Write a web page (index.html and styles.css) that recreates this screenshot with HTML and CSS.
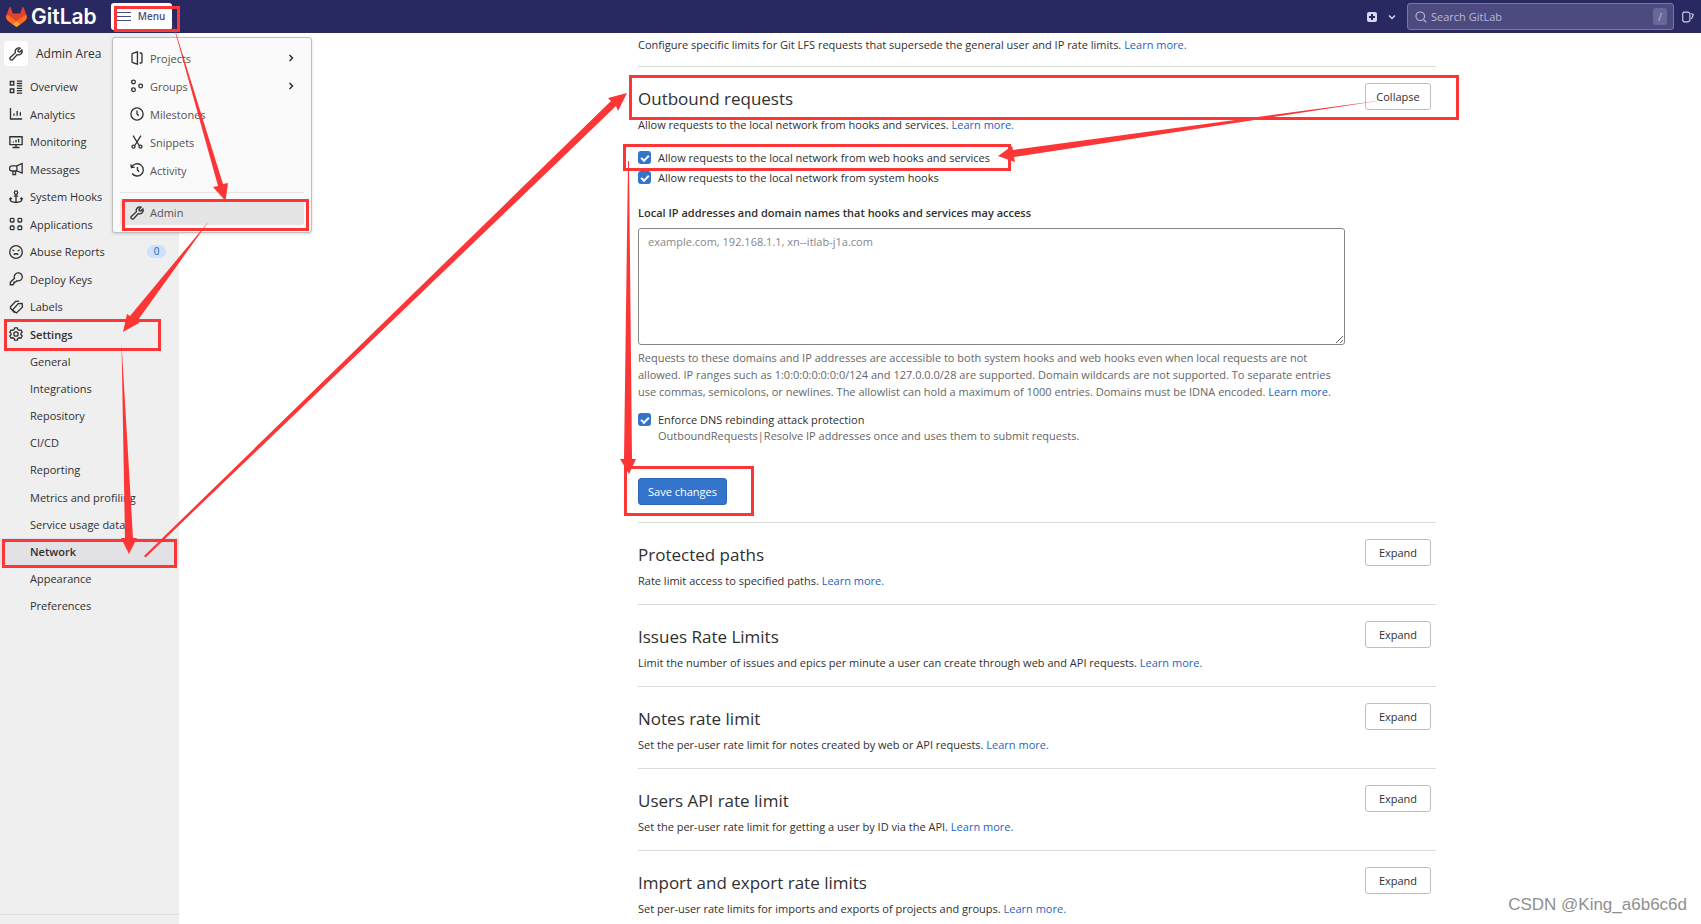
FILE: index.html
```html
<!DOCTYPE html>
<html lang="en">
<head>
<meta charset="utf-8">
<title>Network · Admin Area · GitLab</title>
<link rel="stylesheet" href="styles.css">
</head>
<body>
<svg class="sprite" aria-hidden="true">
  <symbol id="wrench" viewBox="0 0 16 16"><path d="M12.600 1.300a4 4 0 0 0-5.200 5.200L1.500 11.900a1.850 1.850 0 0 0 2.600 2.600L9.500 8.600a4 4 0 0 0 5.200-5.200L12.300 5.800 10.600 5.400 10.200 3.700z"/></symbol>
  <symbol id="overview" viewBox="0 0 16 16"><path d="M1.500 1.700h4v4h-4zM1.500 10.300h4v4h-4zM9 1.200h6M9 4h6M9 6.800h6M9 9.600h6M9 12.200h6M9 14.900h6"/></symbol>
  <symbol id="analytics" viewBox="0 0 16 16"><path d="M1.700 1v12.700H15M5.700 10V7.500M9.300 10V4.500M13 10V6"/></symbol>
  <symbol id="monitoring" viewBox="0 0 16 16"><path d="M1 2h14v9H1zM8 11v3M4 14.300h8M5 8.500V7.500M8 8.500v-3M11 8.500V4.500"/></symbol>
  <symbol id="messages" viewBox="0 0 16 16"><path d="M15 1.700v11L9 10.300H3.500A2.500 2.500 0 0 1 3.500 4.500H9zM9 4.500v5.800M4.500 10.500v4h3v-4"/></symbol>
  <symbol id="hook" viewBox="0 0 16 16"><path d="M8 5v9M5.500 7h5M1.500 9v2.500C2 14 6 14 8 14s6 0 6.500-2.500V9M.5 10.800l1.200-1.700 1.700 1.200M12.700 10.300l1.700-1.200 1.200 1.700"/><circle cx="8" cy="3" r="1.900"/></symbol>
  <symbol id="applications" viewBox="0 0 16 16"><rect x="1.500" y="1.500" width="4.200" height="4.200" rx="1"/><rect x="10.300" y="1.500" width="4.200" height="4.200" rx="1"/><rect x="1.500" y="10.300" width="4.200" height="4.200" rx="1"/><rect x="10.300" y="10.300" width="4.200" height="4.200" rx="1"/></symbol>
  <symbol id="abuse" viewBox="0 0 16 16"><circle cx="8" cy="8" r="7.200"/><path d="M5.500 11.300c1-1.700 4-1.700 5 0M4 5.500l2 1.300M12 5.500l-2 1.300"/></symbol>
  <symbol id="key" viewBox="0 0 16 16"><path d="M6.300 7.200a4.600 4.600 0 1 1 2.800 2.700L7.500 11.500H5.700v1.700L4.500 14.600H1.500v-2.800z"/><path d="M10.900 5h.2"/></symbol>
  <symbol id="labels" viewBox="0 0 16 16"><path d="M1 8.500 7.500 1.500 11.500 1.200M4 11.500 10.500 4.200l4.500-.2.300 4.300L8.500 14.800zM1 8.500 6.500 14.500M11.700 7.300h.5"/></symbol>
  <symbol id="gear" viewBox="0 0 16 16"><path d="M6.500 1h3l.6 2 1.500.8 2-.5 1.500 2.600L13.700 7.300v1.500l1.400 1.400-1.500 2.600-2-.5-1.500.8-.6 2h-3l-.6-2-1.500-.8-2 .5L.9 10.200l1.400-1.400V7.300L.9 5.900l1.500-2.600 2 .5L5.900 3z"/><circle cx="8" cy="8" r="2.500"/></symbol>
  <symbol id="project" viewBox="0 0 16 16"><path d="M3 2.700 8.500.9v14.200L3 13.300a1 1 0 0 1-.7-1V3.700A1 1 0 0 1 3 2.700zM11 2.300h1.700a1 1 0 0 1 1 1v9.400a1 1 0 0 1-1 1H11"/></symbol>
  <symbol id="groups" viewBox="0 0 16 16"><circle cx="4" cy="3.300" r="2.100"/><circle cx="4" cy="12.300" r="2.100"/><circle cx="12.200" cy="8" r="2.100"/></symbol>
  <symbol id="clock" viewBox="0 0 16 16"><circle cx="8" cy="8" r="7"/><path d="M8 4v4l2 2"/></symbol>
  <symbol id="snippets" viewBox="0 0 16 16"><path d="M3.500.800 10.500 12M12.500.800 5.500 12"/><circle cx="4" cy="13.300" r="1.700"/><circle cx="12" cy="13.300" r="1.700"/></symbol>
  <symbol id="history" viewBox="0 0 16 16"><path d="M2 4.500A7 7 0 1 1 2.500 12M1 1.500l.7 3.700 3.600-.5M8.500 4.500V8l2 2"/></symbol>
  <symbol id="right" viewBox="0 0 16 16"><path d="m6 4 4 4-4 4"/></symbol>
  <symbol id="down" viewBox="0 0 16 16"><path d="m4 6 4 4 4-4"/></symbol>
  <symbol id="search" viewBox="0 0 16 16"><circle cx="7" cy="7" r="5.700"/><path d="m11.500 11.500 3.500 3.500"/></symbol>
  <symbol id="issues" viewBox="0 0 16 16"><path d="M2.500 1.500H8l2.500 1.500v10L8 14.500H2.500L1 13V3zM12.500 3.500l2.500 1.200-2.300 6"/></symbol>
</svg>

<header class="topbar">
  <a class="brand" href="#" aria-label="GitLab">
    <svg class="brand-mark" viewBox="0 0 25 24" aria-hidden="true"><path fill="#e24329" d="m24.500 9.500-3.400-8.900a.9.900 0 0 0-1.700.1L17.100 7.700H7.900L5.600.7A.9.900 0 0 0 3.900.6L.5 9.500a6.300 6.300 0 0 0 2.100 7.300l9.900 7.200 9.900-7.200a6.300 6.300 0 0 0 2.100-7.300z"/><path fill="#fc6d26" d="M24.500 9.500a11.500 11.500 0 0 0-4.600 2.100l-7.400 5.600 4.700 3.600 5.200-4a6.300 6.300 0 0 0 2.100-7.300zM.5 9.500a11.500 11.500 0 0 1 4.600 2.100l7.400 5.600-4.700 3.600-5.200-4A6.300 6.300 0 0 1 .5 9.500z"/><path fill="#fca326" d="m7.800 20.800 4.700-3.600 4.700 3.600-4.700 3.200z"/></svg>
    <span>GitLab</span>
  </a>
  <button class="menu-button" type="button" aria-expanded="true"><i class="bars"></i>Menu</button>
  <div class="topbar-tools">
    <button class="new-button" type="button" aria-label="Create new"><span class="plus"></span><svg class="icon icon-small"><use href="#down"/></svg></button>
    <label class="search"><svg class="icon"><use href="#search"/></svg><input type="text" placeholder="Search GitLab" aria-label="Search GitLab"><kbd>/</kbd></label>
    <a class="issues-link" href="#" aria-label="Issues"><svg class="icon"><use href="#issues"/></svg></a>
  </div>
</header>

<div class="menu-panel">
  <a href="#"><svg class="icon"><use href="#project"/></svg>Projects<svg class="icon icon-small chevron"><use href="#right"/></svg></a>
  <a href="#"><svg class="icon"><use href="#groups"/></svg>Groups<svg class="icon icon-small chevron"><use href="#right"/></svg></a>
  <a href="#"><svg class="icon"><use href="#clock"/></svg>Milestones</a>
  <a href="#"><svg class="icon"><use href="#snippets"/></svg>Snippets</a>
  <a href="#"><svg class="icon"><use href="#history"/></svg>Activity</a>
  <hr>
  <a class="current" href="#"><svg class="icon"><use href="#wrench"/></svg>Admin</a>
</div>

<div class="page">
  <nav class="sidebar" aria-label="Admin navigation">
    <a class="context" href="#"><span class="context-icon"><svg class="icon"><use href="#wrench"/></svg></span>Admin Area</a>
    <ul class="nav-list">
      <li><a href="#"><svg class="icon"><use href="#overview"/></svg>Overview</a></li>
      <li><a href="#"><svg class="icon"><use href="#analytics"/></svg>Analytics</a></li>
      <li><a href="#"><svg class="icon"><use href="#monitoring"/></svg>Monitoring</a></li>
      <li><a href="#"><svg class="icon"><use href="#messages"/></svg>Messages</a></li>
      <li><a href="#"><svg class="icon"><use href="#hook"/></svg>System Hooks</a></li>
      <li><a href="#"><svg class="icon"><use href="#applications"/></svg>Applications</a></li>
      <li><a href="#"><svg class="icon"><use href="#abuse"/></svg>Abuse Reports<span class="count">0</span></a></li>
      <li><a href="#"><svg class="icon"><use href="#key"/></svg>Deploy Keys</a></li>
      <li><a href="#"><svg class="icon"><use href="#labels"/></svg>Labels</a></li>
      <li><a class="strong" href="#"><svg class="icon"><use href="#gear"/></svg>Settings</a></li>
    </ul>
    <ul class="nav-list nav-sub">
      <li><a href="#">General</a></li>
      <li><a href="#">Integrations</a></li>
      <li><a href="#">Repository</a></li>
      <li><a href="#">CI/CD</a></li>
      <li><a href="#">Reporting</a></li>
      <li><a href="#">Metrics and profiling</a></li>
      <li><a href="#">Service usage data</a></li>
      <li><a class="strong selected" href="#">Network</a></li>
      <li><a href="#">Appearance</a></li>
      <li><a href="#">Preferences</a></li>
    </ul>
    <div class="sidebar-foot"></div>
  </nav>

  <main class="main">
    <div class="settings">
      <p class="intro">Configure specific limits for Git LFS requests that supersede the general user and IP rate limits. <a href="#">Learn more.</a></p>

      <section class="section section-open">
        <div class="section-head">
          <div><h2>Outbound requests</h2><p>Allow requests to the local network from hooks and services. <a href="#">Learn more.</a></p></div>
          <button class="button" type="button">Collapse</button>
        </div>
        <form class="form">
          <label class="check"><input type="checkbox" checked><span>Allow requests to the local network from web hooks and services</span></label>
          <label class="check"><input type="checkbox" checked><span>Allow requests to the local network from system hooks</span></label>
          <label class="field-label" for="allowlist">Local IP addresses and domain names that hooks and services may access</label>
          <textarea id="allowlist" placeholder="example.com, 192.168.1.1, xn--itlab-j1a.com"></textarea>
          <p class="help">Requests to these domains and IP addresses are accessible to both system hooks and web hooks even when local requests are not allowed. IP ranges such as 1:0:0:0:0:0:0:0/124 and 127.0.0.0/28 are supported. Domain wildcards are not supported. To separate entries use commas, semicolons, or newlines. The allowlist can hold a maximum of 1000 entries. Domains must be IDNA encoded. <a href="#">Learn more.</a></p>
          <label class="check check-dns"><input type="checkbox" checked><span>Enforce DNS rebinding attack protection<small>OutboundRequests|Resolve IP addresses once and uses them to submit requests.</small></span></label>
          <button class="button button-primary" type="submit">Save changes</button>
        </form>
      </section>

      <section class="section"><div class="section-head"><div><h2>Protected paths</h2><p>Rate limit access to specified paths. <a href="#">Learn more.</a></p></div><button class="button" type="button">Expand</button></div></section>
      <section class="section"><div class="section-head"><div><h2>Issues Rate Limits</h2><p>Limit the number of issues and epics per minute a user can create through web and API requests. <a href="#">Learn more.</a></p></div><button class="button" type="button">Expand</button></div></section>
      <section class="section"><div class="section-head"><div><h2>Notes rate limit</h2><p>Set the per-user rate limit for notes created by web or API requests. <a href="#">Learn more.</a></p></div><button class="button" type="button">Expand</button></div></section>
      <section class="section"><div class="section-head"><div><h2>Users API rate limit</h2><p>Set the per-user rate limit for getting a user by ID via the API. <a href="#">Learn more.</a></p></div><button class="button" type="button">Expand</button></div></section>
      <section class="section"><div class="section-head"><div><h2>Import and export rate limits</h2><p>Set per-user rate limits for imports and exports of projects and groups. <a href="#">Learn more.</a></p></div><button class="button" type="button">Expand</button></div></section>
    </div>
  </main>
</div>

<svg class="marks" width="1701" height="924" viewBox="0 0 1701 924" aria-hidden="true">
  <g fill="none" stroke="#fc3636" stroke-width="3">
    <rect x="115.500" y="7.500" width="63" height="23"/>
    <rect x="123.500" y="200.500" width="184" height="29"/>
    <rect x="5.500" y="320.500" width="154" height="29"/>
    <rect x="3.500" y="540.500" width="172" height="26"/>
    <rect x="630.500" y="76.500" width="827" height="42"/>
    <rect x="624.500" y="145.500" width="385" height="24"/>
    <rect x="625.500" y="467.500" width="127" height="47"/>
  </g>
  <g fill="#fc3636">
    <path d="M171 17 223 184l5-1-2.500 18L213 187l5-1z"/>
    <path d="M209 221 138 320l1 3-16 9 4-18 3 2z"/>
    <path d="M121.500 343 133 538h4l-8 16-8-16h4z"/>
    <path d="M144 556 611 101l-3-3 19-5-9 18-2-5L145.500 557.500z"/>
    <path d="M1384 100 1014 157l1 5-17-6 14-10 1 4z"/>
    <path d="M628 161h1L632 459h4l-7 15-9-15h4z"/>
  </g>
</svg>
<div class="watermark">CSDN @King_a6b6c6d</div>
</body>
</html>
```
FILE: styles.css
```css
* { box-sizing: border-box; }
body {
  margin: 0;
  display: flex;
  flex-direction: column;
  position: relative;
  overflow: hidden;
  height: 100vh;
  font: 11px/17px "Open Sans", "Noto Sans", sans-serif;
  color: #303030;
  background: #fff;
}
a { color: #1f63c0; text-decoration: none; }
p, h2, ul { margin: 0; padding: 0; }
button, input, textarea { font: inherit; }
.sprite { display: none; }
.icon { width: 14px; height: 14px; flex: none; fill: none; stroke: currentColor; stroke-width: 1.5; overflow: visible; }
.icon-small { width: 12px; height: 12px; stroke-width: 2; }

.topbar { flex: none; height: 33px; display: flex; align-items: center; background: #292961; color: #d1d1f0; }
.brand { display: flex; align-items: center; gap: 4px; padding-left: 6px; color: #fff; font: 600 21px/24px Inter, sans-serif; }
.brand-mark { width: 21px; height: 20px; }
.menu-button { display: flex; align-items: center; gap: 7px; height: 27px; margin-left: 14px; padding: 0 7px 0 6px; border: 0; border-radius: 3px; background: #fff; color: #4b4b86; font-size: 10px; font-weight: 600; }
.bars { width: 14px; height: 9px; border: solid #4b4b86; border-width: 1px 0; background: linear-gradient(#4b4b86, #4b4b86) center / 100% 1px no-repeat; }
.topbar-tools { margin-left: auto; display: flex; align-items: center; }
.new-button { display: flex; align-items: center; gap: 9px; border: 0; padding: 0; margin-right: 9px; background: none; color: inherit; }
.plus { width: 10px; height: 10px; border-radius: 2px; background: linear-gradient(#292961, #292961) center / 6px 2px no-repeat, linear-gradient(#292961, #292961) center / 2px 6px no-repeat, #d8d8f2; }
.search { width: 267px; height: 27px; display: flex; align-items: center; gap: 4px; padding: 0 6px 0 7px; border: 1px solid #7777a8; border-radius: 3px; background: #4c4a7e; color: #b9b9dc; }
.search .icon { width: 12px; height: 12px; }
.search input { flex: 1; min-width: 0; padding: 0; border: 0; outline: 0; background: none; color: inherit; }
.search input::placeholder { color: #b9b9dc; }
.search kbd { width: 14px; height: 17px; border-radius: 3px; background: #69679a; text-align: center; font: 11px/17px "Open Sans", sans-serif; }
.issues-link { display: flex; margin-left: 8px; padding-right: 7px; color: #d1d1f0; }
.issues-link .icon { width: 12px; height: 12px; }

.page { flex: 1; display: flex; min-height: 0; }
.sidebar { flex: none; width: 179px; display: flex; flex-direction: column; padding-top: 8px; background: #efefef; }
.sidebar a { color: #303030; }
.context { display: flex; align-items: center; gap: 8px; padding-left: 4px; margin-bottom: 7px; }
.sidebar .context { font-weight: 500; font-size: 12px; }
.context-icon { width: 24px; height: 25px; display: grid; place-items: center; border-radius: 3px; background: #fff; }
.nav-list { list-style: none; display: grid; grid-auto-rows: 1fr; min-height: 275px; }
.nav-list a { height: 100%; display: flex; align-items: center; gap: 7px; padding: 0 13px 0 9px; }
.nav-sub { min-height: 271px; }
.nav-list.nav-sub a { padding-left: 30px; }
.nav-list .strong { font-weight: 600; }
.nav-list .selected { background: #e1e1e6; }
.count { margin-left: auto; width: 19px; border-radius: 7px; background: #cbe2f9; color: #1f63c0; text-align: center; font-size: 10px; line-height: 13px; }
.sidebar-foot { margin-top: auto; height: 10px; border-top: 1px solid #dbdbdb; }

.menu-panel { position: absolute; z-index: 1; left: 112px; top: 37px; width: 200px; padding: 6px 7px 7px; border: 1px solid #bfbfbf; border-radius: 3px; background: #fafafa; box-shadow: 0 1px 3px #00000026; }
.menu-panel a { height: 28px; display: flex; align-items: center; gap: 6px; padding: 0 7px 0 10px; color: #525252; border-radius: 3px; }
.menu-panel .icon { color: #303030; }
.menu-panel .chevron { margin-left: auto; }
.menu-panel hr { margin: 8px 0 7px; border: 0; border-top: 1px solid #e5e5e5; }
.menu-panel .current { height: 25px; background: #e5e5e5; }

.main { flex: 1; display: flex; justify-content: center; overflow: hidden; }
.settings { flex: none; width: 100%; max-width: 992px; padding-left: 194px; }
.intro { padding: 3px 0 13px; }
.section { min-height: 82px; padding-top: 16px; border-top: 1px solid #dbdbdb; }
.section-head { display: flex; justify-content: space-between; align-items: flex-start; padding-right: 5px; }
.section h2 { font-size: 17px; line-height: 24px; font-weight: 500; margin: 4px 0 5px; }
.button { width: 66px; height: 27px; padding: 0; border: 1px solid #bfbfbf; border-radius: 3px; background: #fff; color: #303030; }
.button-primary { width: 89px; border-color: #2f68b4; background: #3375cc; color: #fff; }
.form { display: flex; flex-direction: column; align-items: flex-start; padding: 16px 0 17px; }
.check { display: flex; align-items: flex-start; gap: 7px; margin-bottom: 3px; }
.check input { appearance: none; width: 13px; height: 13px; margin: 2px 0; border-radius: 3px; background: #3375cc; display: grid; place-items: center; }
.check input::before { content: ""; width: 6px; height: 3px; border: solid #fff; border-width: 0 0 2px 2px; transform: rotate(-45deg); }
.check small { display: block; font-size: 11px; line-height: 16px; color: #666; }
.field-label { margin: 15px 0 7px; font-weight: 600; }
.form textarea { width: 707px; max-width: 100%; height: 117px; padding: 4px 9px; border: 1px solid #868686; border-radius: 3px; resize: both; }
.form textarea::placeholder { color: #868686; }
.help { max-width: 707px; margin: 4px 0 11px; color: #666; }
.check-dns { margin-bottom: 34px; }

.marks { position: absolute; z-index: 2; left: 0; top: 0; pointer-events: none; }
.watermark { position: absolute; right: 14px; bottom: 7px; color: #8f8f8f; font: 17px/24px "Liberation Sans", Arial, sans-serif; }
```
